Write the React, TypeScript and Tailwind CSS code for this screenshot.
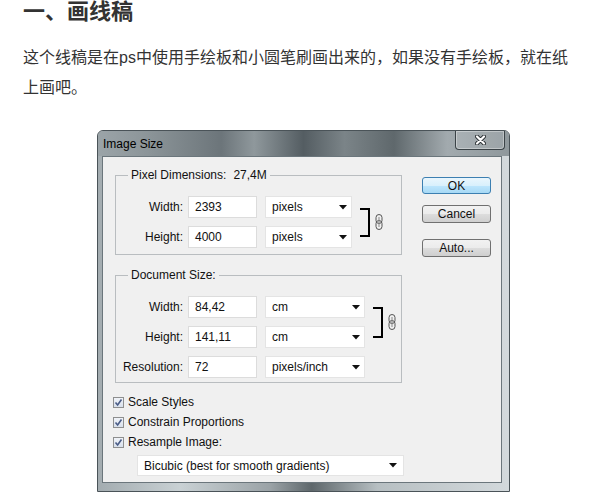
const dlg = "font-['Liberation_Sans',Arial,sans-serif] text-[12px] text-[#111]";

function Field({ value }: { value: string }) {
  return (
    <div className="ml-[5px] flex h-[22px] w-[69px] items-center border border-[#dcdcdc] bg-white pl-[6px]">
      {value}
    </div>
  );
}

function Arrow() {
  return (
    <svg width="8" height="5" viewBox="0 0 8 5">
      <polygon points="0,0 8,0 4,4.5" fill="#111" />
    </svg>
  );
}

function Combo({ value, w }: { value: string; w: string }) {
  return (
    <div className={`ml-[8px] flex h-[22px] items-center justify-between border border-[#e4e4e4] bg-white pl-[6px] pr-[4px] ${w}`}>
      <span>{value}</span>
      <Arrow />
    </div>
  );
}

function Row({ label, value, unit, w }: { label: string; value: string; unit: string; w: string }) {
  return (
    <div className="flex h-[22px] items-center">
      <span className="w-[67px] text-right">{label}</span>
      <Field value={value} />
      <Combo value={unit} w={w} />
    </div>
  );
}

function Link({ h }: { h: number }) {
  return (
    <div className="flex items-center">
      <svg width="10" height={h} viewBox={`0 0 10 ${h}`} className="ml-[8px]">
        <path d={`M0 1 H9 V${h - 1} H0`} fill="none" stroke="#000" strokeWidth="2" />
      </svg>
      <svg width="8" height="16" viewBox="0 0 8 16" className="ml-[5px]">
        <rect x="1" y="0.5" width="6" height="9" rx="3" fill="none" stroke="#555" />
        <rect x="1" y="6.5" width="6" height="9" rx="3" fill="none" stroke="#555" />
        <line x1="4" y1="3" x2="4" y2="13" stroke="#888" />
      </svg>
    </div>
  );
}

function Check({ label }: { label: string }) {
  return (
    <div className="flex h-[20px] items-center">
      <div className="flex h-[11px] w-[11px] items-center justify-center border border-[#8e8f8f] bg-[linear-gradient(#f0f3f8,#d8e0ec)]">
        <svg width="9" height="9" viewBox="0 0 9 9">
          <path d="M1.5 4.5 L3.6 7 L7.5 1.5" fill="none" stroke="#4a5c86" strokeWidth="1.6" />
        </svg>
      </div>
      <span className="ml-[4px]">{label}</span>
    </div>
  );
}

function Btn({ label, primary }: { label: string; primary?: boolean }) {
  return (
    <div
      className={
        primary
          ? "flex h-[17px] w-[69px] items-center justify-center rounded-[3px] border border-[#3c7fb1] bg-[linear-gradient(#eaf6fd,#d9f0fc_50%,#bee6fd_50%,#a7d9f5)]"
          : "flex h-[18px] w-[69px] items-center justify-center rounded-[3px] border border-[#707070] bg-[linear-gradient(#f2f2f2,#ebebeb_50%,#dddddd_50%,#cfcfcf)]"
      }
    >
      {label}
    </div>
  );
}

export default function App() {
  return (
    <div className="min-h-[504px] bg-white pl-[23px] font-['Liberation_Sans','Noto_Sans_CJK_SC',sans-serif] text-[#333]">
      <h1 className="text-[22px] font-bold leading-[24px]">一、画线稿</h1>
      <p className="mt-[19px] text-[16px] leading-[30px]">
        这个线稿是在ps中使用手绘板和小圆笔刷画出来的，如果没有手绘板，就在纸
        <br />
        上画吧。
      </p>

      <div className={`ml-[74px] mt-[27px] flex h-[362px] w-[413px] flex-col rounded-t-[6px] border border-[#4a5358] bg-[linear-gradient(90deg,#a3acb0,#c9d1d4_20%,#9aa2a6_42%,#5e676b_52%,#b7bfc2_68%,#d3d9dc_100%)] ${dlg}`}>
        <div className="flex h-[25px] justify-between rounded-t-[5px] bg-[linear-gradient(90deg,#9ba4a8,#8c9599_12%,#6c757a_30%,#8f989c_38%,#545d62_50%,#7b8488_60%,#5f686c_72%,#a2aaae_85%,#8f989c_100%)]">
          <span className="pl-[5px] pt-[6px] text-[12px] leading-[14px] text-black">Image Size</span>
          <div className="mr-[4px] flex h-[19px] w-[50px] items-center justify-center rounded-b-[4px] border border-t-0 border-[#3b4347] bg-white/10 shadow-[inset_0_0_0_1px_rgba(255,255,255,0.35)]">
            <svg width="11" height="10" viewBox="0 0 11 10">
              <path d="M2 1.5 L9 8.5 M9 1.5 L2 8.5" stroke="#2a3033" strokeWidth="4" strokeLinecap="round" />
              <path d="M2 1.5 L9 8.5 M9 1.5 L2 8.5" stroke="#fff" strokeWidth="2.2" strokeLinecap="round" />
            </svg>
          </div>
        </div>

        <div className="mb-[8px] ml-[4px] mr-[7px] flex flex-1 border border-[#6b767c] bg-[#f0f0f0] pl-[10px] pt-[11px]">
          <div className="w-[291px]">
            <fieldset className="ml-[2px] w-[287px] border border-[#b9bdc0] pb-[6px]">
              <legend className="ml-[12px] px-[3px] leading-[14px]">
                Pixel Dimensions:<span className="ml-[7px]">27,4M</span>
              </legend>
              <div className="flex items-center pt-[14px]">
                <div className="flex flex-col gap-[8px]">
                  <Row label="Width:" value="2393" unit="pixels" w="w-[87px]" />
                  <Row label="Height:" value="4000" unit="pixels" w="w-[87px]" />
                </div>
                <Link h={29} />
              </div>
            </fieldset>

            <fieldset className="ml-[2px] mt-[13px] w-[287px] border border-[#b9bdc0] pb-[4px]">
              <legend className="ml-[12px] px-[3px] leading-[14px]">Document Size:</legend>
              <div className="flex flex-col gap-[8px] pt-[14px]">
                <div className="flex items-center">
                  <div className="flex flex-col gap-[8px]">
                    <Row label="Width:" value="84,42" unit="cm" w="w-[100px]" />
                    <Row label="Height:" value="141,11" unit="cm" w="w-[100px]" />
                  </div>
                  <Link h={31} />
                </div>
                <Row label="Resolution:" value="72" unit="pixels/inch" w="w-[100px]" />
              </div>
            </fieldset>

            <div className="mt-[9px]">
              <Check label="Scale Styles" />
              <Check label="Constrain Proportions" />
              <Check label="Resample Image:" />
            </div>

            <div className="ml-[24px] mt-[3px] flex h-[21px] w-[267px] items-center justify-between border border-[#e4e4e4] bg-white pl-[6px] pr-[6px]">
              <span>Bicubic (best for smooth gradients)</span>
              <Arrow />
            </div>
          </div>

          <div className="ml-[18px] flex flex-col pt-[9px]">
            <Btn label="OK" primary />
            <div className="mt-[11px]">
              <Btn label="Cancel" />
            </div>
            <div className="mt-[16px]">
              <Btn label="Auto..." />
            </div>
          </div>
        </div>
      </div>
    </div>
  );
}
